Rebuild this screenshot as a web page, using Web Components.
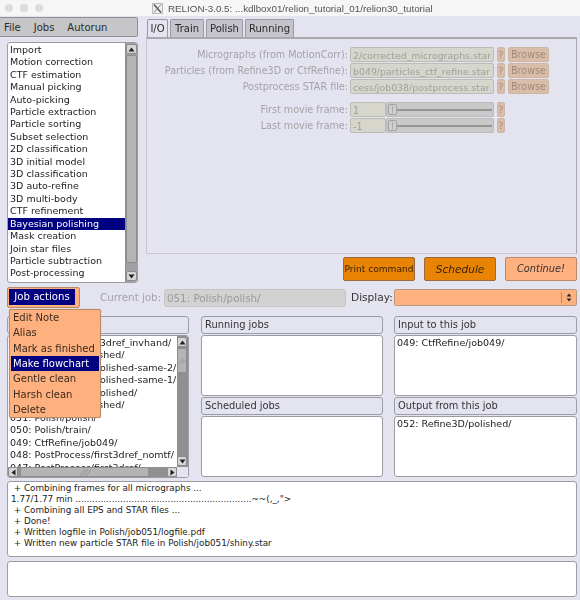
<!DOCTYPE html>
<html><head><meta charset="utf-8">
<style>
html,body{margin:0;padding:0;background:#e4e4f0;}
body{width:580px;height:600px;overflow:hidden;font-family:"DejaVu Sans",sans-serif;font-size:9.6px;color:#222;}
</style></head><body>
<relion-window>
  <title-bar slot="title" text="RELION-3.0.5: ...kdlbox01/relion_tutorial_01/relion30_tutorial"></title-bar>
  <menu-bar slot="menu"><span>File</span><span>Jobs</span><span>Autorun</span></menu-bar>
  <job-types slot="types" selected="Bayesian polishing" items="Import|Motion correction|CTF estimation|Manual picking|Auto-picking|Particle extraction|Particle sorting|Subset selection|2D classification|3D initial model|3D classification|3D auto-refine|3D multi-body|CTF refinement|Bayesian polishing|Mask creation|Join star files|Particle subtraction|Post-processing"></job-types>
  <tab-panel slot="panel">
    <form-row label="Micrographs (from MotionCorr):" value="2/corrected_micrographs.star" browse></form-row>
    <form-row label="Particles (from Refine3D or CtfRefine):" value="b049/particles_ctf_refine.star" browse></form-row>
    <form-row label="Postprocess STAR file:" value="cess/job038/postprocess.star" browse></form-row>
    <form-row class="gap" label="First movie frame:" value="1" slider></form-row>
    <form-row label="Last movie frame:" value="-1" slider></form-row>
  </tab-panel>
  <action-bar slot="actions">
    <run-button kind="dark">Print command</run-button>
    <run-button kind="dark" big>Schedule</run-button>
    <run-button kind="light">Continue!</run-button>
  </action-bar>
  <job-bar slot="jobbar"></job-bar>
  <job-columns slot="columns"></job-columns>
  <text-pane slot="log" h="76">+ Combining frames for all micrographs ...
1.77/1.77 min ...............................................................~~(,_,"&gt;
+ Combining all EPS and STAR files ...
+ Done!
+ Written logfile in Polish/job051/logfile.pdf
+ Written new particle STAR file in Polish/job051/shiny.star</text-pane>
  <text-pane slot="err" h="36"></text-pane>
  <action-menu slot="popup" selected="Make flowchart" items="Edit Note|Alias|Mark as finished|Make flowchart|Gentle clean|Harsh clean|Delete"></action-menu>
</relion-window>
<script>
const TRI={
 up:'<svg width="7" height="5" viewBox="0 0 7 5"><path d="M3.5 0.5L6.5 4.5H0.5Z" fill="#222"/></svg>',
 down:'<svg width="7" height="5" viewBox="0 0 7 5"><path d="M0.5 0.5H6.5L3.5 4.5Z" fill="#222"/></svg>',
 left:'<svg width="5" height="7" viewBox="0 0 5 7"><path d="M4.5 0.5V6.5L0.5 3.5Z" fill="#222"/></svg>',
 right:'<svg width="5" height="7" viewBox="0 0 5 7"><path d="M0.5 0.5L4.5 3.5L0.5 6.5Z" fill="#222"/></svg>'
};
const GRIP='<svg width="12" height="8" viewBox="0 0 12 8"><path d="M1 8L6 1M4 8L9 1M7 8L12 1" stroke="#8d8d8d" stroke-width=".8" fill="none"/></svg>';
function def(name,css,html){
  customElements.define(name,class extends HTMLElement{
    constructor(){super();this.attachShadow({mode:'open'});}
    connectedCallback(){this.shadowRoot.innerHTML='<style>'+css+'</style>'+(typeof html==='function'?html(this):html);}
  });
}
def('relion-window',`
:host{display:block;position:relative;width:580px;height:600px;filter:blur(.3px);}
.top{display:grid;grid-template-columns:139px 431px;column-gap:7px;height:266px;margin-top:1px;}
.left{display:flex;flex-direction:column;gap:5px;}
.right{display:flex;flex-direction:column;}
.below{padding:0 3px 0 7px;display:flex;flex-direction:column;}
.jb{margin-top:4px;} .cols{margin-top:8px;} .log{margin-top:3px;} .err{margin-top:4px;}
.pop{position:absolute;left:9px;top:309px;}
`,`
<slot name="title"></slot>
<div class="top">
  <div class="left"><slot name="menu"></slot><div style="padding-left:7px"><slot name="types"></slot></div></div>
  <div class="right"><slot name="panel"></slot><slot name="actions"></slot></div>
</div>
<div class="below">
  <div class="jb"><slot name="jobbar"></slot></div>
  <div class="cols"><slot name="columns"></slot></div>
  <div class="log"><slot name="log"></slot></div>
  <div class="err"><slot name="err"></slot></div>
</div>
<div class="pop"><slot name="popup"></slot></div>
`);
def('title-bar',`
:host{display:flex;align-items:center;height:16px;background:#f6f6f6;position:relative;color:#555;}
.dots{display:flex;gap:7px;padding-left:5px;width:152px;box-sizing:border-box;}
.d{width:8px;height:8px;border-radius:50%;background:#dcdcdc;}
svg{margin-right:5px;flex:none;}
span{font-family:"Liberation Sans",sans-serif;font-size:9.8px;white-space:pre;}
`,t=>`<div class="dots"><i class="d"></i><i class="d"></i><i class="d"></i></div>
<svg width="11" height="11" viewBox="0 0 11 11"><rect x=".5" y=".5" width="10" height="10" fill="#eee" stroke="#bbb"/><path d="M2 1.5L9 9.5" stroke="#555" stroke-width="1.5"/><path d="M9 1.5L2 9.5" stroke="#555" stroke-width=".7"/></svg>
<span>${t.getAttribute('text')}</span>`);
def('menu-bar',`
:host{display:flex;height:20px;box-sizing:border-box;width:138px;align-items:center;background:#c6c6c8;border:1px solid #8f8f94;border-left:0;border-radius:0 2px 2px 0;padding-left:4px;gap:13px;font-size:10px;color:#2a2a2a;}
`,`<slot></slot>`);
def('job-types',`
:host{display:flex;height:241px;width:131px;box-sizing:border-box;background:#fff;border:1px solid #9c9ca4;border-radius:3px;overflow:hidden;}
.rows{flex:1;padding-top:1px;font-size:9.5px;}
.r{height:12.42px;line-height:12.42px;padding-left:2px;white-space:nowrap;color:#222;}
.r.s{background:#000080;color:#fff;}
.bar{width:11px;background:#a0a0a2;display:flex;flex-direction:column;border-left:1px solid #8f8f90;box-sizing:content-box;}
.b{margin:1px 0;background:#d6d6d8;border:1px solid #8c8c8c;border-radius:2px;box-sizing:content-box;display:flex;align-items:center;justify-content:center;height:8px;}
.th{height:208px;background:#b4b4b6;border:1px solid #8c8c8c;border-radius:2px;box-sizing:border-box;}
.sp{flex:1;}
`,t=>{const sel=t.getAttribute('selected');return `<div class="rows">${t.getAttribute('items').split('|').map(x=>`<div class="r${x===sel?' s':''}">${x}</div>`).join('')}</div>
<div class="bar"><div class="b">${TRI.up}</div><div class="th"></div><div class="sp"></div><div class="b">${TRI.down}</div></div>`});
def('tab-panel',`
:host{display:block;}
.tabs{display:flex;height:18px;margin-top:2px;padding-left:1px;gap:2px;font-size:10px;}
.t{background:#c4c4cc;border:1px solid #9a9aa0;border-bottom:0;border-radius:2px 2px 0 0;line-height:17px;color:#2a2a2a;box-sizing:border-box;text-align:center;}
.t.a{background:#e4e4f0;}
.body{height:217px;box-sizing:border-box;border-top:2px solid #a9a9ad;border-left:1px solid #c6c6cc;border-right:1px solid #a9a9ad;border-bottom:1px solid #c6c6cc;padding-top:8px;width:431px;background:#e4e4f0;}
`,`<div class="tabs"><div class="t a" style="width:21px">I/O</div><div class="t" style="width:34px">Train</div><div class="t" style="width:37px">Polish</div><div class="t" style="width:49px">Running</div></div>
<div class="body"><slot></slot></div>`);
def('form-row',`
:host{display:flex;height:16px;font-size:9.6px;color:#a3a3a6;}
:host(.gap){margin-top:7px;}
label{width:201px;text-align:right;line-height:15px;white-space:nowrap;}
.i{margin-left:2px;height:15px;line-height:15px;background:#d6d6cc;border:1px solid #bcbcb4;border-radius:2px;box-sizing:border-box;padding:0 2px;color:#a0a0a0;overflow:hidden;white-space:nowrap;}
.f{width:144px;font-size:9.4px;}
.n{width:36px;}
.s{width:108px;height:15px;background:#c9c9c9;border:1px solid #bcbcbc;border-radius:2px;box-sizing:border-box;display:flex;align-items:center;padding-left:1px;}
.k{width:9px;height:11px;background:#cfcfcf;border:1px solid #a2a2a2;border-radius:2px;box-sizing:border-box;flex:none;}
.k::after{content:"";display:block;width:1px;height:7px;background:#a8a8a8;margin:1px auto;}
.g{flex:1;height:2px;background:#969696;margin-right:1px;}
.q{margin-left:3px;width:8px;height:15px;line-height:14px;text-align:center;background:#d8bda8;border:1px solid #cdb6a4;border-radius:2px;box-sizing:border-box;color:#a08a7c;font-size:9px;}
.br{margin-left:3px;width:41px;height:15px;line-height:14px;text-align:center;background:#d8bda8;border:1px solid #cdb6a4;border-radius:2px;box-sizing:border-box;color:#a08a7c;font-size:9.6px;}
`,t=>{const v=t.getAttribute('value');const sl=t.hasAttribute('slider');return `<label>${t.getAttribute('label')}</label>`+
(sl?`<div class="i n">${v}</div><div class="s"><div class="k"></div><div class="g"></div></div>`:`<div class="i f">${v}</div>`)+
`<div class="q">?</div>`+(t.hasAttribute('browse')?`<div class="br">Browse</div>`:'')});
def('action-bar',`
:host{display:flex;justify-content:flex-end;gap:9px;margin-top:3px;width:431px;}
`,`<slot></slot>`);
def('run-button',`
:host{display:block;width:72px;height:24px;box-sizing:border-box;border:1px solid #9a6a3a;border-radius:2px;text-align:center;line-height:22px;font-size:9.1px;color:#333;white-space:nowrap;}
:host([kind=dark]){background:#e88304;color:#3a2400;}
:host([kind=light]){background:#ffb07f;border-color:#b88a68;font-style:italic;color:#333;font-size:9.8px;}
:host([big]){font-style:italic;font-size:10.6px;}
`,`<slot></slot>`);
def('job-bar',`
:host{display:flex;height:21px;font-size:10.3px;}
.ja{width:73px;height:21px;box-sizing:border-box;background:#ffb07f;border:1px solid #b88a68;border-radius:2px;padding:1px 4px 2px 1px;}
.ja div{height:100%;background:#000080;color:#fff;line-height:16px;text-align:center;font-size:10.2px;white-space:nowrap;}
.lb{margin-left:20px;width:63px;line-height:20px;color:#a3a3a6;white-space:nowrap;}
.cur{margin-left:1px;width:182px;height:18px;margin-top:2px;background:#d2d2d2;border:1px solid #c4c4c4;border-radius:3px;box-sizing:border-box;padding-left:2px;line-height:16px;color:#9a9a9a;}
.dl{margin-left:5px;width:41px;line-height:20px;color:#333;font-size:10.6px;white-space:nowrap;}
.ch{margin-left:2px;width:183px;height:17px;margin-top:2px;background:#ffb07f;border:1px solid #b89a80;border-radius:2px;box-sizing:border-box;display:flex;justify-content:flex-end;align-items:center;}
.ar{width:14px;height:11px;border-left:1px solid #c08a60;display:flex;flex-direction:column;align-items:center;justify-content:center;gap:1px;}
.ar svg{width:6px;height:4px;display:block;}
`,`<div class="ja"><div>Job actions</div></div><div class="lb">Current job:</div><div class="cur">051: Polish/polish/</div><div class="dl">Display:</div>
<div class="ch"><div class="ar">${TRI.up}${TRI.down}</div></div>`);
def('job-columns',`
:host{display:grid;grid-template-columns:194px 193px 183px;height:162px;}
.c{display:flex;flex-direction:column;width:182px;}
.c.w{width:183px;}
.h{height:18px;box-sizing:border-box;border:1px solid #9c9ca4;border-radius:3px;padding-left:3px;line-height:16px;font-size:9.9px;color:#333;flex:none;}
.h + *{margin-top:1px;}
.bx{background:#fff;border:1px solid #9c9ca4;border-radius:3px;box-sizing:border-box;padding:0 2px;font-size:9.55px;line-height:13px;color:#222;white-space:nowrap;overflow:hidden;}
.sm{height:61px;}
.sm + .h{margin-top:1px;}
.fin{height:143px;padding:0;display:grid;grid-template-columns:1fr 11px;grid-template-rows:1fr 11px;}
.rows{padding:1px 0 0 2px;line-height:12.45px;overflow:hidden;height:130px;}
.v{background:#909092;display:flex;flex-direction:column;}
.hz{background:#909092;display:flex;}
.b{background:#d6d6d8;border:1px solid #8c8c8c;border-radius:2px;box-sizing:border-box;display:flex;align-items:center;justify-content:center;flex:none;width:10px;height:10px;margin:1px 0 0 0;}
.v .th{height:25px;background:#b4b4b6;border:1px solid #8c8c8c;border-radius:2px;box-sizing:border-box;display:flex;align-items:center;justify-content:center;margin-top:1px;width:10px;overflow:hidden;}
.hz .th{width:129px;height:10px;background:#b4b4b6;border:1px solid #8c8c8c;border-radius:2px;box-sizing:border-box;margin:0 0 0 2px;display:flex;align-items:center;justify-content:center;}
.sp{flex:1;}
.corner{background:#e4e4f0;}
`,`
<div class="c"><div class="h">Finished jobs</div>
 <div class="bx fin"><div class="rows">
  <div>057: Refine3D/first3dref_invhand/</div><div>056: Refine3D/polished/</div><div>055: PostProcess/polished-same-2/</div><div>054: PostProcess/polished-same-1/</div><div>053: PostProcess/polished/</div><div>052: Refine3D/polished/</div><div>051: Polish/polish/</div><div>050: Polish/train/</div><div>049: CtfRefine/job049/</div><div>048: PostProcess/first3dref_nomtf/</div><div>047: PostProcess/first3dref/</div>
 </div>
 <div class="v"><div class="b">${TRI.up}</div><div class="th">${GRIP}</div><div class="sp"></div><div class="b" style="margin-bottom:1px">${TRI.down}</div></div>
 <div class="hz"><div class="b" style="margin:0">${TRI.left}</div><div class="th">${GRIP}</div><div class="sp"></div><div class="b" style="margin:0">${TRI.right}</div></div>
 <div class="corner"></div></div></div>
<div class="c"><div class="h">Running jobs</div><div class="bx sm"></div><div class="h">Scheduled jobs</div><div class="bx sm"></div></div>
<div class="c w"><div class="h">Input to this job</div><div class="bx sm">049: CtfRefine/job049/</div><div class="h">Output from this job</div><div class="bx sm">052: Refine3D/polished/</div></div>
`);
def('text-pane',`
:host{display:block;background:#fff;border:1px solid #9c9ca4;border-radius:3px;box-sizing:border-box;width:570px;padding:1px 2px 1px 3px;font-size:8.8px;line-height:11px;color:#222;}
.p{white-space:pre;}
`,t=>{t.style.height=t.getAttribute('h')+'px';
 const tx=t.textContent.replace(/^(\+)/gm,' $1').replace(/&/g,'&amp;').replace(/</g,'&lt;');
 return `<div class="p">${tx}</div>`});
def('action-menu',`
:host{display:block;width:92px;height:109px;box-sizing:border-box;background:#ffb07f;border:1px solid #b88a68;border-radius:2px;padding:0 1px;font-size:10px;color:#3a2a1e;box-shadow:0 0 1px #c09070;}
.m{height:15.35px;line-height:15.35px;padding-left:2px;white-space:nowrap;}
.m.s{background:#000080;color:#fff;}
`,t=>{const s=t.getAttribute('selected');return t.getAttribute('items').split('|').map(x=>`<div class="m${x===s?' s':''}">${x}</div>`).join('')});
</script>
</body></html>
